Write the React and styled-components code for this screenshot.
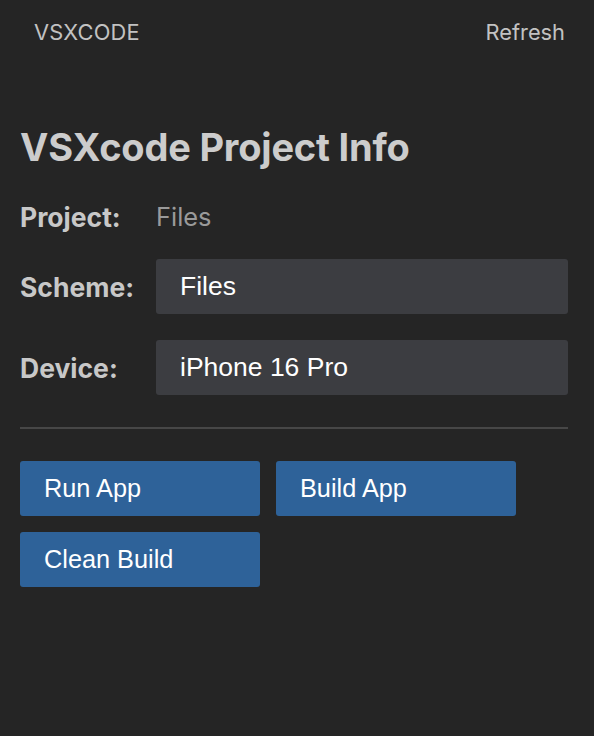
import styled, { createGlobalStyle } from "styled-components";

const GlobalStyle = createGlobalStyle`
  html, body {
    margin: 0;
    padding: 0;
    background: #252525;
  }
  body {
    font-family: Inter, "Noto Sans", sans-serif;
  }
`;

const Page = styled.div`
  width: 594px;
  height: 736px;
  background: #252525;
  box-sizing: border-box;
  padding: 0 26px 0 20px;
`;

const Header = styled.header`
  display: flex;
  justify-content: space-between;
  align-items: center;
  height: 64px;
  padding: 0 3px 0 14px;
  color: #c2c2c2;
  font-size: 21.8px;
`;

const HeaderTitle = styled.span`
  letter-spacing: 0.2px;
`;

const HeaderAction = styled.span`
  cursor: pointer;
`;

const Title = styled.h1`
  margin: 61px 0 32px;
  font-size: 38px;
  font-weight: 700;
  line-height: 44px;
  color: #cccccc;
  letter-spacing: -0.2px;
`;

const Row = styled.div`
  display: flex;
  align-items: center;
  margin-bottom: ${({ gap }) => gap}px;
`;

const Label = styled.div`
  width: 136px;
  flex-shrink: 0;
  font-size: 26.5px;
  font-weight: 700;
  color: #c8c8c8;
`;

const Value = styled.div`
  font-size: 25.4px;
  color: #9a9a9a;
  line-height: 30px;
`;

const Select = styled.div`
  flex: 1;
  height: 55px;
  display: flex;
  align-items: center;
  padding: 0 24px;
  background: #3c3d41;
  border-radius: 3px;
  color: #ffffff;
  font-family: "Liberation Sans", Arial, sans-serif;
  font-size: 26.5px;
`;

const Divider = styled.hr`
  border: none;
  height: 2px;
  background: #474747;
  margin: 32px 0 32px;
`;

const Buttons = styled.div`
  display: grid;
  grid-template-columns: 240px 240px;
  gap: 16px;
`;

const Button = styled.button`
  height: 55px;
  border: none;
  border-radius: 3px;
  background: #2e6299;
  color: #ffffff;
  text-align: left;
  padding: 0 24px;
  font-family: "Liberation Sans", Arial, sans-serif;
  font-size: 25.3px;
  cursor: pointer;
`;

export default function App() {
  return (
    <>
      <GlobalStyle />
      <Page>
        <Header>
          <HeaderTitle>VSXCODE</HeaderTitle>
          <HeaderAction>Refresh</HeaderAction>
        </Header>
        <Title>VSXcode Project Info</Title>
        <Row gap={26}>
          <Label>Project:</Label>
          <Value>Files</Value>
        </Row>
        <Row gap={26}>
          <Label>Scheme:</Label>
          <Select>Files</Select>
        </Row>
        <Row gap={0}>
          <Label>Device:</Label>
          <Select>iPhone 16 Pro</Select>
        </Row>
        <Divider />
        <Buttons>
          <Button>Run App</Button>
          <Button>Build App</Button>
          <Button>Clean Build</Button>
        </Buttons>
      </Page>
    </>
  );
}
